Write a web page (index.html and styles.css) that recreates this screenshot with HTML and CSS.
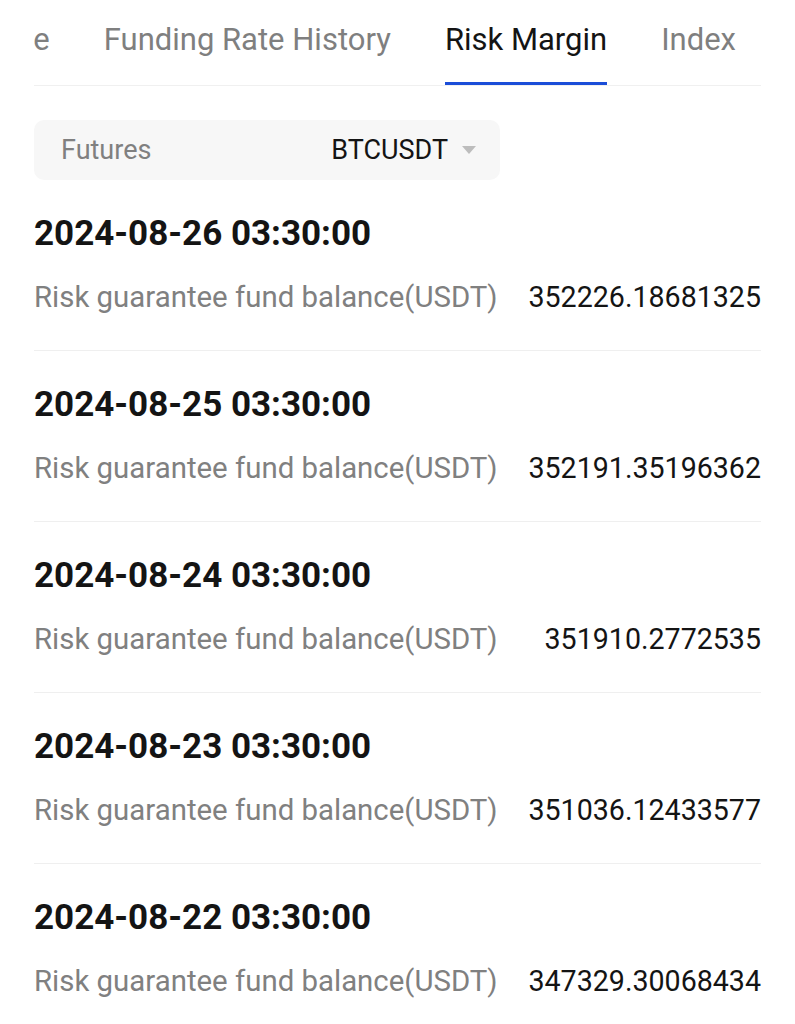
FILE: index.html
```html
<!DOCTYPE html>
<html lang="en">
<head>
  <meta charset="UTF-8">
  <title>Risk Margin</title>
  <link rel="stylesheet" href="styles.css">
</head>
<body>
<div class="page">
  <div class="tabs">
    <div class="tabs-track">
      <span class="tab">Funding Rate</span>
      <span class="tab">Funding Rate History</span>
      <span class="tab active">Risk Margin</span>
      <span class="tab">Index</span>
    </div>
  </div>

  <div class="content">
    <div class="select">
      <span class="select-label">Futures</span>
      <span class="select-value">BTCUSDT <span class="caret"></span></span>
    </div>

    <div class="record">
      <div class="record-date">2024-08-26 03:30:00</div>
      <div class="record-row">
        <span class="record-label">Risk guarantee fund balance(USDT)</span>
        <span class="record-value">352226.18681325</span>
      </div>
    </div>
    <div class="record">
      <div class="record-date">2024-08-25 03:30:00</div>
      <div class="record-row">
        <span class="record-label">Risk guarantee fund balance(USDT)</span>
        <span class="record-value">352191.35196362</span>
      </div>
    </div>
    <div class="record">
      <div class="record-date">2024-08-24 03:30:00</div>
      <div class="record-row">
        <span class="record-label">Risk guarantee fund balance(USDT)</span>
        <span class="record-value">351910.2772535</span>
      </div>
    </div>
    <div class="record">
      <div class="record-date">2024-08-23 03:30:00</div>
      <div class="record-row">
        <span class="record-label">Risk guarantee fund balance(USDT)</span>
        <span class="record-value">351036.12433577</span>
      </div>
    </div>
    <div class="record">
      <div class="record-date">2024-08-22 03:30:00</div>
      <div class="record-row">
        <span class="record-label">Risk guarantee fund balance(USDT)</span>
        <span class="record-value">347329.30068434</span>
      </div>
    </div>
  </div>
</div>
</body>
</html>
```

FILE: styles.css
```css
* {
  box-sizing: border-box;
}

body {
  margin: 0;
  background: #fff;
  font-family: Roboto, "Noto Sans", sans-serif;
  color: #141414;
}

.page {
  width: 795px;
  height: 1024px;
  overflow: hidden;
}

/* tabs strip, scrolled to the end so the first tab is cut */
.tabs {
  margin: 0 34px;
  overflow: hidden;
  border-bottom: 1px solid #f0f0f0;
}

.tabs-track {
  display: flex;
  justify-content: flex-end;
  gap: 54px;
  padding-right: 25px;
  white-space: nowrap;
}

.tab {
  flex-shrink: 0;
  font-size: 31px;
  line-height: 40px;
  padding: 20px 0 22px;
  color: #7f7f7f;
  border-bottom: 4px solid transparent;
  margin-bottom: -1px;
}

.tab.active {
  color: #141414;
  border-bottom-color: #1b4dd8;
}

.content {
  padding: 34px 34px 0;
}

.select {
  width: 466px;
  height: 60px;
  background: #f7f7f7;
  border-radius: 10px;
  display: flex;
  align-items: center;
  justify-content: space-between;
  padding: 0 24px 0 27px;
  font-size: 27px;
}

.select-label {
  color: #808080;
}

.select-value {
  color: #141414;
  display: flex;
  align-items: center;
  gap: 14px;
}

.caret {
  width: 0;
  height: 0;
  border-left: 7px solid transparent;
  border-right: 7px solid transparent;
  border-top: 8px solid #bdbdbd;
}

.record {
  border-bottom: 1px solid #efefef;
  padding: 34px 0 35px;
}

.record:last-child {
  border-bottom: none;
}

.record-date {
  font-size: 35px;
  font-weight: 700;
  line-height: 40px;
}

.record-row {
  display: flex;
  justify-content: space-between;
  align-items: center;
  margin-top: 25px;
  line-height: 36px;
}

.record-label {
  font-size: 29.4px;
  color: #808080;
}

.record-value {
  font-size: 28.6px;
  color: #141414;
}
```
